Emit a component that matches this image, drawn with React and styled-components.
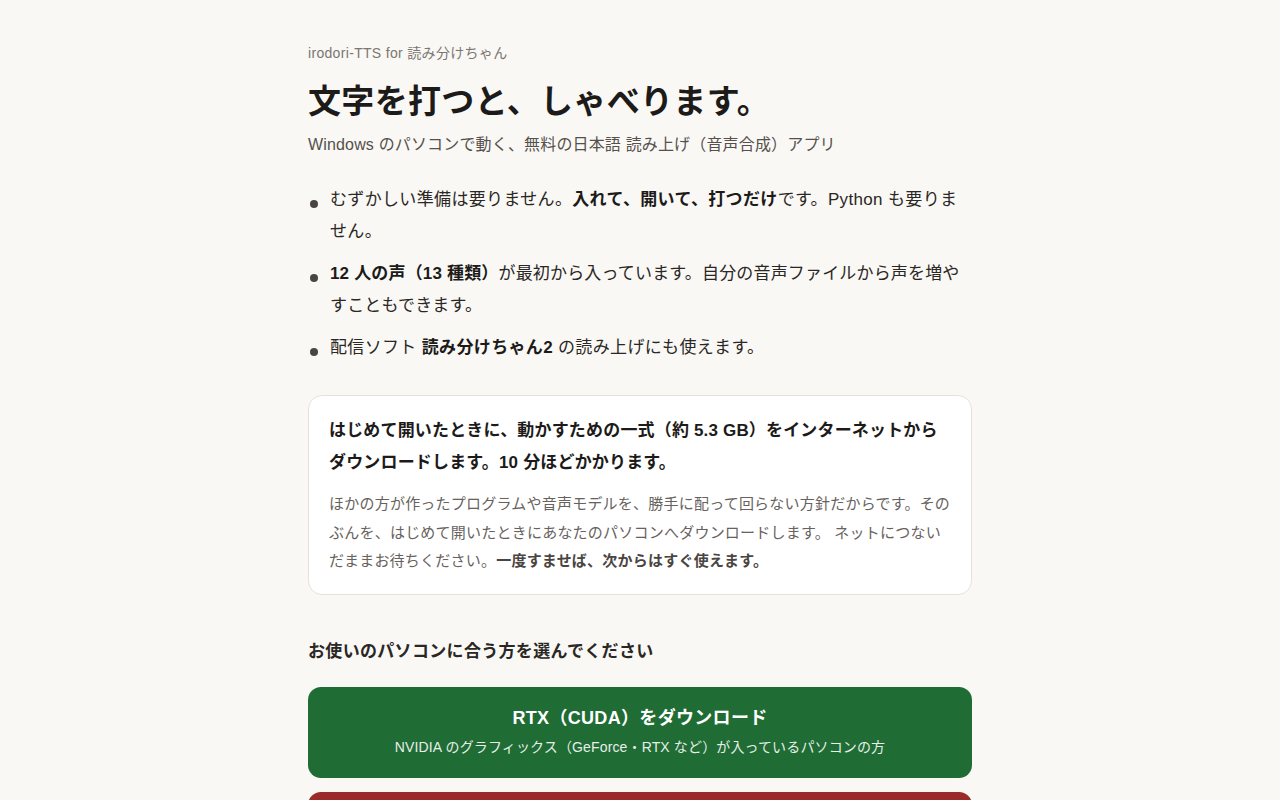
import styled, { createGlobalStyle } from 'styled-components';

const Global = createGlobalStyle`
  body {
    margin: 0;
    background: #f9f8f5;
    color: #222;
    font-family: "Liberation Sans", Arial, "Noto Sans CJK JP", sans-serif;
    letter-spacing: 0.02em;
  }
`;

const Page = styled.main`
  width: 664px;
  margin: 0 auto;
  padding-top: 43px;
`;

const Eyebrow = styled.div`
  font-size: 14px;
  line-height: 20px;
  color: #7b7671;
`;

const Title = styled.h1`
  margin: 17px 0 0;
  font-size: 33px;
  line-height: 44px;
  font-weight: 700;
  letter-spacing: 0.01em;
  color: #1d1b19;
`;

const Lead = styled.p`
  margin: 8px 0 0;
  font-size: 16px;
  line-height: 26px;
  letter-spacing: 0.01em;
  color: #55504b;
`;

const List = styled.ul`
  list-style: none;
  margin: 26px 0 0;
  padding: 0;
  display: flex;
  flex-direction: column;
  gap: 10px;
`;

const Item = styled.li`
  position: relative;
  padding-left: 22px;
  font-size: 17px;
  line-height: 32px;
  letter-spacing: ${(p) => (p.$tight ? '0.01em' : '0.02em')};
  color: #2a2724;

  &::before {
    content: '';
    position: absolute;
    left: 2px;
    top: 16px;
    width: 8px;
    height: 8px;
    border-radius: 50%;
    background: #4a4541;
  }

  b {
    font-weight: 700;
    color: #1d1b19;
  }
`;

const Card = styled.section`
  margin-top: 31px;
  background: #fff;
  border: 1px solid #e6e1da;
  border-radius: 14px;
  padding: 19px 20px 18px;
`;

const CardTitle = styled.p`
  margin: 0;
  font-size: 17px;
  line-height: 32px;
  font-weight: 700;
  letter-spacing: 0.01em;
  color: #1d1b19;
`;

const CardBody = styled.p`
  margin: 11px 0 0;
  font-size: 15px;
  line-height: 28.5px;
  letter-spacing: 0.015em;
  color: #67625d;

  b {
    color: #4a4541;
  }
`;

const Heading = styled.h2`
  margin: 43px 0 0;
  font-size: 17px;
  line-height: 28px;
  font-weight: 700;
  color: #2a2724;
`;

const Buttons = styled.div`
  margin-top: 21px;
  display: flex;
  flex-direction: column;
  gap: 14px;
`;

const DownloadButton = styled.a`
  display: flex;
  flex-direction: column;
  align-items: center;
  gap: 6px;
  padding: 18px 20px 21px;
  border-radius: 13px;
  background: ${(p) => p.$bg};
  color: #fff;
  text-decoration: none;
`;

const ButtonTitle = styled.span`
  font-size: 18px;
  line-height: 26px;
  font-weight: 700;
`;

const ButtonSub = styled.span`
  font-size: 14px;
  line-height: 20px;
  letter-spacing: 0.01em;
  color: #e6efe8;
`;

const App = () => {
  return (
    <>
      <Global />
      <Page>
        <Eyebrow>irodori-TTS for 読み分けちゃん</Eyebrow>
        <Title>文字を打つと、しゃべります。</Title>
        <Lead>Windows のパソコンで動く、無料の日本語 読み上げ（音声合成）アプリ</Lead>
        <List>
          <Item>
            むずかしい準備は要りません。<b>入れて、開いて、打つだけ</b>です。Python も要りません。
          </Item>
          <Item $tight>
            <b>12 人の声（13 種類）</b>が最初から入っています。自分の音声ファイルから声を増やすこともできます。
          </Item>
          <Item>
            配信ソフト <b>読み分けちゃん2</b> の読み上げにも使えます。
          </Item>
        </List>
        <Card>
          <CardTitle>
            はじめて開いたときに、動かすための一式（約 5.3 GB）をインターネットからダウンロードします。10 分ほどかかります。
          </CardTitle>
          <CardBody>
            ほかの方が作ったプログラムや音声モデルを、勝手に配って回らない方針だからです。そのぶんを、はじめて開いたときにあなたのパソコンへダウンロードします。 ネットにつないだままお待ちください。<b>一度すませば、次からはすぐ使えます。</b>
          </CardBody>
        </Card>
        <Heading>お使いのパソコンに合う方を選んでください</Heading>
        <Buttons>
          <DownloadButton href="#" $bg="#1f6c35">
            <ButtonTitle>RTX（CUDA）をダウンロード</ButtonTitle>
            <ButtonSub>NVIDIA のグラフィックス（GeForce・RTX など）が入っているパソコンの方</ButtonSub>
          </DownloadButton>
          <DownloadButton href="#" $bg="#9b2b2b">
            <ButtonTitle>CPU 版をダウンロード</ButtonTitle>
            <ButtonSub>それ以外のパソコンの方</ButtonSub>
          </DownloadButton>
        </Buttons>
      </Page>
    </>
  );
};

export default App;
